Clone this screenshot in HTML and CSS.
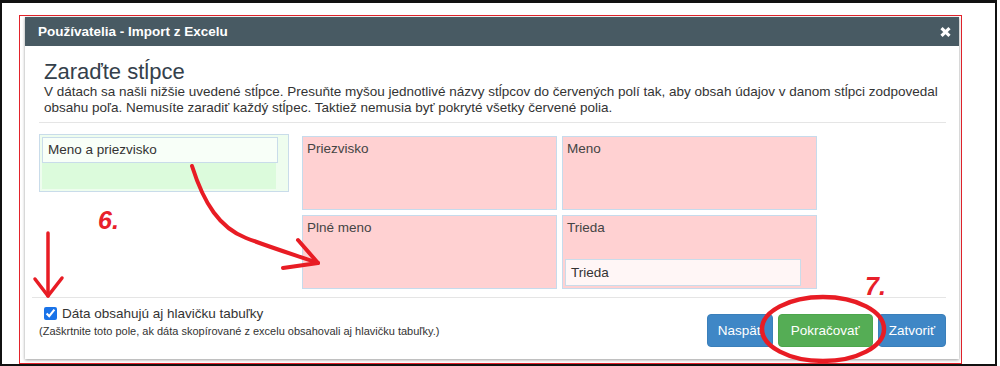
FILE: index.html
```html
<!DOCTYPE html>
<html lang="sk">

<head>
  <meta charset="UTF-8">
  <meta name="viewport" content="width=device-width, initial-scale=1.0">
  <title>Používatelia - Import z Excelu</title>
  <link rel="stylesheet" href="styles.css">
</head>

<body>

  <div class="frame">
    <div class="highlight">
      <div class="modal">
        <div class="modal-header">
          <span class="modal-title">Používatelia - Import z Excelu</span>
          <svg class="close" width="11" height="10" viewBox="0 0 11 10">
            <path d="M1.5 1.2 L9.5 8.8 M9.5 1.2 L1.5 8.8" stroke="#fff" stroke-width="3.2" />
          </svg>
        </div>

        <div class="modal-body">
          <div class="intro">
            <h3 class="heading">Zaraďte stĺpce</h3>
            <p class="intro-text">V dátach sa našli nižšie uvedené stĺpce. Presuňte myšou jednotlivé názvy stĺpcov do červených polí tak, aby obsah údajov v danom stĺpci zodpovedal obsahu poľa. Nemusíte zaradiť každý stĺpec. Taktiež nemusia byť pokryté všetky červené polia.</p>
          </div>

          <div class="mapping">
            <div class="source">
              <div class="source-list">
                <div class="chip">Meno a priezvisko</div>
              </div>
            </div>
            <div class="targets">
              <div class="target"><span class="target-label">Priezvisko</span></div>
              <div class="target"><span class="target-label">Meno</span></div>
              <div class="target"><span class="target-label">Plné meno</span></div>
              <div class="target">
                <span class="target-label">Trieda</span>
                <div class="chip chip-placed">Trieda</div>
              </div>
            </div>
          </div>
        </div>

        <div class="modal-footer">
          <div class="header-option">
            <label class="check">
              <input type="checkbox" checked>
              <span>Dáta obsahujú aj hlavičku tabuľky</span>
            </label>
            <div class="hint">(Zaškrtnite toto pole, ak dáta skopírované z excelu obsahovali aj hlavičku tabuľky.)</div>
          </div>
          <div class="actions">
            <button class="btn btn-blue">Naspäť</button>
            <button class="btn btn-green">Pokračovať</button>
            <button class="btn btn-blue">Zatvoriť</button>
          </div>
        </div>
      </div>
    </div>

    <!-- hand drawn notes on top of the screenshot -->
    <svg class="notes" width="1000" height="366" viewBox="0 0 1000 366">
      <g fill="none" stroke="#e81c24" stroke-linecap="round" stroke-linejoin="round">
        <path d="M192 166 C204 204 220 228 246 238 S298 256 318 263" stroke-width="4" />
        <path d="M298 240 L318 263 L283 268" stroke-width="4" />
        <path d="M48 233 L48 296" stroke-width="3.5" />
        <path d="M35 279 L48 296 L62 278" stroke-width="3.5" />
        <ellipse cx="823" cy="329" rx="61" ry="32" stroke-width="4.5" />
      </g>
      <text x="98" y="229" class="note-num">6.</text>
      <text x="865" y="295" class="note-num">7.</text>
    </svg>
  </div>

</body>

</html>
```

FILE: styles.css
```css
body {
  margin: 0;
  font-family: "Liberation Sans", Arial, sans-serif;
  color: #333;
  background: #fff;
}

.frame {
  position: relative;
  width: 997px;
  height: 366px;
  border: 2px solid #111;
  border-top-width: 3px;
  box-sizing: border-box;
}

.highlight {
  margin: 12px 0 0 17px;
  width: 943px;
  height: 349px;
  box-sizing: border-box;
  border: 1px solid #e3232b;
  padding: 1px 0 0 5px;
}

.modal {
  width: 934px;
  height: 342px;
  background: #fff;
  box-shadow: 0 1px 3px rgba(0, 0, 0, 0.4);
  display: flex;
  flex-direction: column;
}

.modal-header {
  height: 29px;
  flex-shrink: 0;
  background: #485a63;
  color: #fff;
  display: flex;
  align-items: center;
  justify-content: space-between;
  padding: 0 8px 0 13px;
}

.modal-title {
  font-size: 13.5px;
  font-weight: bold;
}

.modal-body {
  padding: 0 13px 0 14px;
}

.intro {
  padding: 0 5px 6px;
  border-bottom: 1px solid #e5e5e5;
}

.heading {
  margin: 14px 0 0;
  font-size: 22px;
  font-weight: normal;
  line-height: 24px;
  color: #34404b;
}

.intro-text {
  margin: 0;
  font-size: 13.5px;
  line-height: 16px;
}

.mapping {
  display: flex;
  align-items: flex-start;
  margin-top: 11px;
}

.source {
  width: 250px;
  height: 58px;
  box-sizing: border-box;
  border: 1px solid #c9dcea;
  background: #eefdee;
  padding: 2px;
}

.source-list {
  width: 234px;
  height: 52px;
  background: #dcfbdc;
}

.chip {
  width: 236px;
  height: 26px;
  box-sizing: border-box;
  border: 1px solid #c9dcea;
  background: #f8fff8;
  font-size: 13.5px;
  line-height: 24px;
  padding-left: 5px;
  color: #333;
}

.targets {
  margin: 2px 0 0 13px;
  display: grid;
  grid-template-columns: 255px 255px;
  gap: 5px;
}

.target {
  height: 74px;
  box-sizing: border-box;
  border: 1px solid #c6dbec;
  background: #ffd1d2;
  display: flex;
  flex-direction: column;
  justify-content: space-between;
}

.target-label {
  padding: 4px 4px 0;
  font-size: 13.5px;
  line-height: 16px;
  color: #444;
}

.chip-placed {
  margin: 0 0 2px 2px;
  width: 236px;
  height: 27px;
  background: #fff6f6;
  line-height: 25px;
}

.modal-footer {
  margin: 8px 13px 0 7px;
  border-top: 1px solid #e5e5e5;
  display: flex;
  justify-content: space-between;
  align-items: flex-start;
}

.header-option {
  padding: 7px 0 0 7px;
}

.check {
  display: flex;
  align-items: center;
  height: 16px;
  padding-left: 5px;
  font-size: 13.5px;
}

.check input {
  width: 13px;
  height: 13px;
  margin: 0 5px 0 0;
  accent-color: #1a73e8;
}

.hint {
  margin-top: 3px;
  font-size: 11px;
  line-height: 14px;
}

.actions {
  display: flex;
  gap: 5px;
  margin-top: 16px;
}

.btn {
  height: 33px;
  padding: 0 10px;
  border: 1px solid transparent;
  border-radius: 4px;
  font-family: inherit;
  font-size: 13.5px;
  color: #fff;
}

.btn-blue {
  background: #3f87c6;
  border-color: #3a7fba;
}

.btn-green {
  padding: 0 12px;
  background: #55ad55;
  border-color: #4ca64c;
}

.notes {
  position: absolute;
  top: -3px;
  left: -2px;
  pointer-events: none;
}

.note-num {
  font-family: "Liberation Sans", Arial, sans-serif;
  font-size: 25px;
  font-weight: bold;
  font-style: italic;
  fill: #e8202a;
}
```
